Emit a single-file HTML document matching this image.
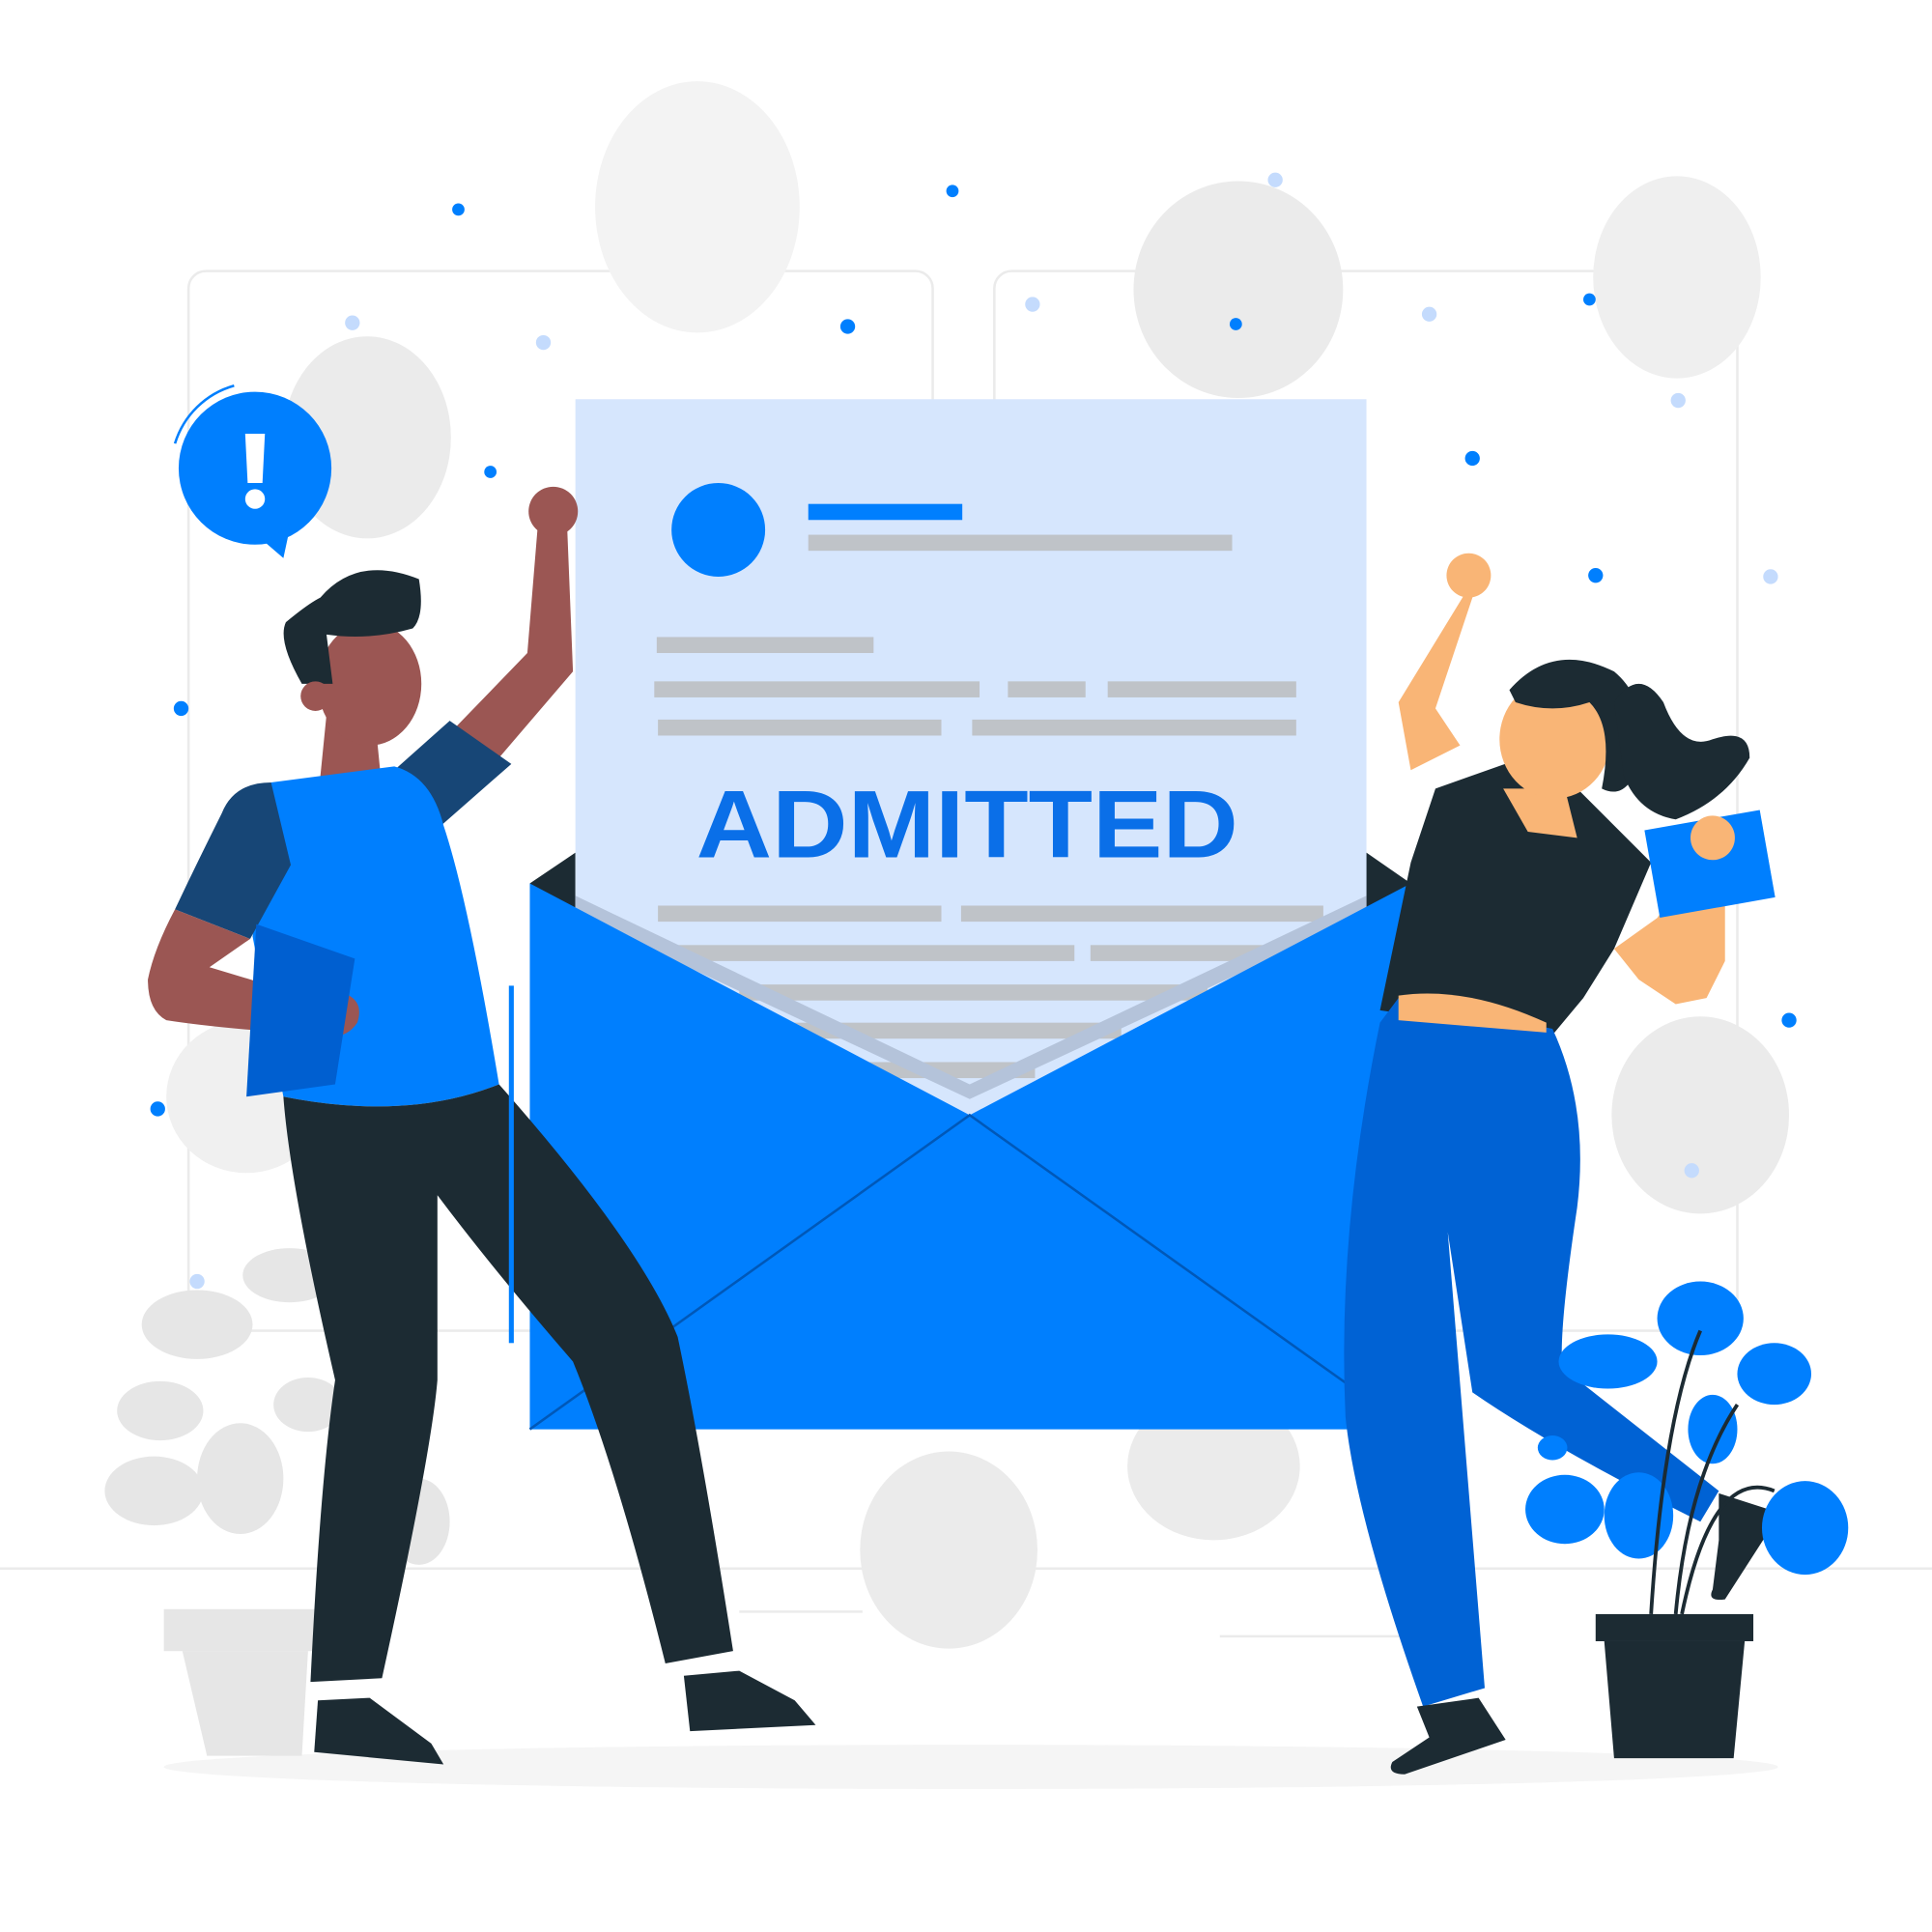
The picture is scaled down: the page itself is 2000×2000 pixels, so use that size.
<!DOCTYPE html>
<html><head><meta charset="utf-8"><style>html,body{margin:0;padding:0;background:#fff}svg{display:block}</style></head>
<body>
<svg width="2000" height="2000" viewBox="0 0 1568 1568" xmlns="http://www.w3.org/2000/svg">
<rect width="1568" height="1568" fill="#fff"/>
<rect x="153" y="220" width="604" height="860" rx="14" fill="none" stroke="#ebebeb" stroke-width="2"/>
<rect x="807" y="220" width="603" height="860" rx="14" fill="none" stroke="#ebebeb" stroke-width="2"/>
<line x1="0" y1="1273" x2="1568" y2="1273" stroke="#ebebeb" stroke-width="2"/>
<line x1="600" y1="1308" x2="700" y2="1308" stroke="#ebebeb" stroke-width="2"/>
<line x1="990" y1="1328" x2="1140" y2="1328" stroke="#ebebeb" stroke-width="2"/>
<ellipse cx="788" cy="1434" rx="655" ry="18" fill="#f5f5f5"/>
<g fill="#ebebeb">
<ellipse cx="566" cy="168" rx="83" ry="102" fill="#f3f3f3"/>
<ellipse cx="1005" cy="235" rx="85" ry="88"/>
<ellipse cx="1361" cy="225" rx="68" ry="82" fill="#efefef"/>
<ellipse cx="298" cy="355" rx="68" ry="82"/>
<ellipse cx="1380" cy="905" rx="72" ry="80"/>
<ellipse cx="200" cy="890" rx="65" ry="62" fill="#f0f0f0"/>
<ellipse cx="770" cy="1258" rx="72" ry="80"/>
<ellipse cx="985" cy="1190" rx="70" ry="60"/>
</g>
<g fill="#e6e6e6">
<ellipse cx="160" cy="1075" rx="45" ry="28"/>
<ellipse cx="235" cy="1035" rx="38" ry="22"/>
<ellipse cx="130" cy="1145" rx="35" ry="24"/>
<ellipse cx="125" cy="1210" rx="40" ry="28"/>
<ellipse cx="195" cy="1200" rx="35" ry="45"/>
<ellipse cx="250" cy="1140" rx="28" ry="22"/>
<ellipse cx="340" cy="1235" rx="25" ry="35"/>
<rect x="133" y="1306" width="125" height="34"/>
<polygon points="148,1340 250,1340 245,1425 168,1425"/>
</g>
<circle cx="207" cy="380" r="62" fill="#007ffe"/>
<polygon points="215,440 236,425 230,453" fill="#007ffe"/>
<path d="M142,360 A70,70 0 0 1 190,313" fill="none" stroke="#007ffe" stroke-width="2"/>
<polygon points="199,352 215,352 213,392 201,392" fill="#fff"/>
<circle cx="207" cy="405" r="8" fill="#fff"/>
<g fill="#007ffe">
<circle cx="372" cy="170" r="5"/><circle cx="773" cy="155" r="5"/><circle cx="1003" cy="263" r="5"/>
<circle cx="688" cy="265" r="6"/><circle cx="1290" cy="243" r="5"/><circle cx="398" cy="383" r="5"/>
<circle cx="1195" cy="372" r="6"/><circle cx="1295" cy="467" r="6"/><circle cx="147" cy="575" r="6"/>
<circle cx="128" cy="900" r="6"/><circle cx="1452" cy="828" r="6"/>
</g>
<g fill="#c4dbfd">
<circle cx="286" cy="262" r="6"/><circle cx="441" cy="278" r="6"/><circle cx="838" cy="247" r="6"/>
<circle cx="1160" cy="255" r="6"/><circle cx="1035" cy="146" r="6"/><circle cx="1362" cy="325" r="6"/>
<circle cx="1437" cy="468" r="6"/><circle cx="160" cy="1040" r="6"/><circle cx="1373" cy="950" r="6"/>
</g>
<polygon points="430,717 467,692 467,900" fill="#1c2b33"/>
<polygon points="1145,717 1109,692 1109,900" fill="#1c2b33"/>
<rect x="467" y="324" width="642" height="580" fill="#d6e6fd"/>
<circle cx="583" cy="430" r="38" fill="#007ffe"/>
<rect x="656" y="409" width="125" height="13" fill="#007ffe"/>
<g fill="#bfc3c8">
<rect x="656" y="434" width="344" height="13"/>
<rect x="533" y="517" width="176" height="13"/>
<rect x="531" y="553" width="264" height="13"/><rect x="818" y="553" width="63" height="13"/><rect x="899" y="553" width="153" height="13"/>
<rect x="534" y="584" width="230" height="13"/><rect x="789" y="584" width="263" height="13"/>
<rect x="534" y="735" width="230" height="13"/><rect x="780" y="735" width="294" height="13"/>
<rect x="550" y="767" width="322" height="13"/><rect x="885" y="767" width="160" height="13"/>
<rect x="600" y="799" width="380" height="13"/>
<rect x="640" y="830" width="270" height="13"/>
<rect x="700" y="862" width="140" height="13"/>
</g>
<text x="565" y="696" font-family="Liberation Sans, sans-serif" font-weight="bold" font-size="78" fill="#0a6fe8" textLength="440" lengthAdjust="spacingAndGlyphs">ADMITTED</text>
<polygon points="467,727 787,880 1109,727 1109,742 787,892 467,742" fill="#b4c3da"/>
<polygon points="430,717 787,905 1145,717 1145,1160 430,1160" fill="#007ffe"/>
<path d="M430,1160 L787,905 L1145,1160" fill="none" stroke="#0058b8" stroke-width="2"/>
<g>
<path d="M1120,820 L1145,700 L1165,640 L1250,610 L1340,700 L1310,770 L1285,810 L1260,840 Z" fill="#1c2b33"/>
<path d="M1145,625 L1135,570 L1190,480 L1200,470 L1165,575 L1185,605 Z" fill="#f9b576"/>
<circle cx="1192" cy="467" r="18" fill="#f9b576"/>
<path d="M1310,770 L1345,745 L1375,700 L1400,690 L1400,780 L1385,810 L1360,815 L1330,795 Z" fill="#f9b576"/>
<rect x="1340" y="665" width="95" height="72" fill="#007ffe" transform="rotate(-10 1388 700)"/>
<circle cx="1390" cy="680" r="18" fill="#f9b576"/>
<path d="M1220,640 L1240,675 L1280,680 L1270,640 Z" fill="#f9b576"/>
<ellipse cx="1262" cy="600" rx="45" ry="48" fill="#f9b576"/>
<path d="M1225,560 Q1260,520 1310,545 Q1340,570 1330,620 Q1320,650 1300,640 Q1310,590 1290,570 Q1260,580 1230,570 Z" fill="#1c2b33"/>
<path d="M1310,570 Q1330,540 1350,570 Q1365,610 1390,600 Q1420,590 1420,615 Q1400,650 1360,665 Q1330,660 1318,630 Z" fill="#1c2b33"/>
<path d="M1135,810 L1260,835 Q1290,900 1280,980 Q1265,1080 1268,1110 L1395,1210 L1380,1235 Q1260,1175 1195,1130 L1175,1000 L1205,1370 L1155,1385 Q1100,1230 1092,1150 Q1085,1000 1120,830 Z" fill="#0062d4"/>
<path d="M1135,808 Q1190,800 1255,830 L1255,838 L1135,828 Z" fill="#f9b576"/>
<path d="M1150,1385 L1200,1378 L1222,1412 L1140,1440 Q1125,1440 1130,1430 L1160,1410 Z" fill="#1c2b33"/>
<path d="M1395,1212 L1445,1228 L1400,1298 Q1385,1300 1390,1290 L1395,1250 Z" fill="#1c2b33"/>
</g>
<g fill="#007ffe">
<ellipse cx="1380" cy="1070" rx="35" ry="30"/>
<ellipse cx="1440" cy="1115" rx="30" ry="25"/>
<ellipse cx="1305" cy="1105" rx="40" ry="22"/>
<ellipse cx="1390" cy="1160" rx="20" ry="28"/>
<ellipse cx="1270" cy="1225" rx="32" ry="28"/>
<ellipse cx="1330" cy="1230" rx="28" ry="35"/>
<ellipse cx="1465" cy="1240" rx="35" ry="38"/>
<ellipse cx="1260" cy="1175" rx="12" ry="10"/>
</g>
<path d="M1340,1310 Q1350,1150 1380,1080 M1360,1310 Q1370,1200 1410,1140 M1365,1310 Q1390,1190 1440,1210" fill="none" stroke="#1c2b33" stroke-width="3"/>
<rect x="1295" y="1310" width="128" height="22" fill="#1c2b33"/>
<polygon points="1302,1332 1416,1332 1407,1427 1310,1427" fill="#1c2b33"/>
<g>
<path d="M428,530 L437,420 L460,420 L465,545 L405,615 L370,590 Z" fill="#9b5653"/>
<circle cx="449" cy="415" r="20" fill="#9b5653"/>
<path d="M320,625 L365,585 L415,620 L358,670 Z" fill="#174676"/>
<path d="M265,580 L260,630 L310,640 L305,590 Z" fill="#9b5653"/>
<ellipse cx="300" cy="555" rx="42" ry="50" fill="#9b5653"/>
<path d="M245,555 Q225,520 232,505 Q250,490 260,485 Q290,450 340,470 Q345,500 335,510 Q300,520 265,515 L270,555 Z" fill="#1c2b33"/>
<circle cx="256" cy="565" r="12" fill="#9b5653"/>
<path d="M220,635 L320,622 Q350,630 360,670 Q380,730 405,880 Q330,910 230,890 L205,760 Z" fill="#007ffe"/>
<path d="M220,635 Q190,635 180,660 Q160,700 142,738 L203,762 L236,702 Z" fill="#174676"/>
<path d="M142,738 L203,762 L170,785 L210,797 L245,803 Q300,800 290,830 Q280,845 260,840 Q180,835 135,828 Q120,820 120,795 Q125,770 142,738 Z" fill="#9b5653"/>
<polygon points="208,750 288,778 272,880 200,890" fill="#005fd0"/>
<path d="M230,890 Q330,910 405,880 Q520,1010 550,1085 Q570,1180 595,1340 L540,1350 Q500,1190 465,1105 Q400,1030 355,970 L355,1120 Q350,1180 310,1362 L252,1365 Q260,1200 272,1120 Q235,960 230,890 Z" fill="#1c2b33"/>
<path d="M258,1380 L300,1378 L350,1415 L360,1432 L255,1422 Z" fill="#1c2b33"/>
<path d="M555,1360 L600,1356 L645,1380 L662,1400 L560,1405 Z" fill="#1c2b33"/>
<rect x="413" y="800" width="4" height="290" fill="#007ffe"/>
</g>
</svg>
</body></html>
